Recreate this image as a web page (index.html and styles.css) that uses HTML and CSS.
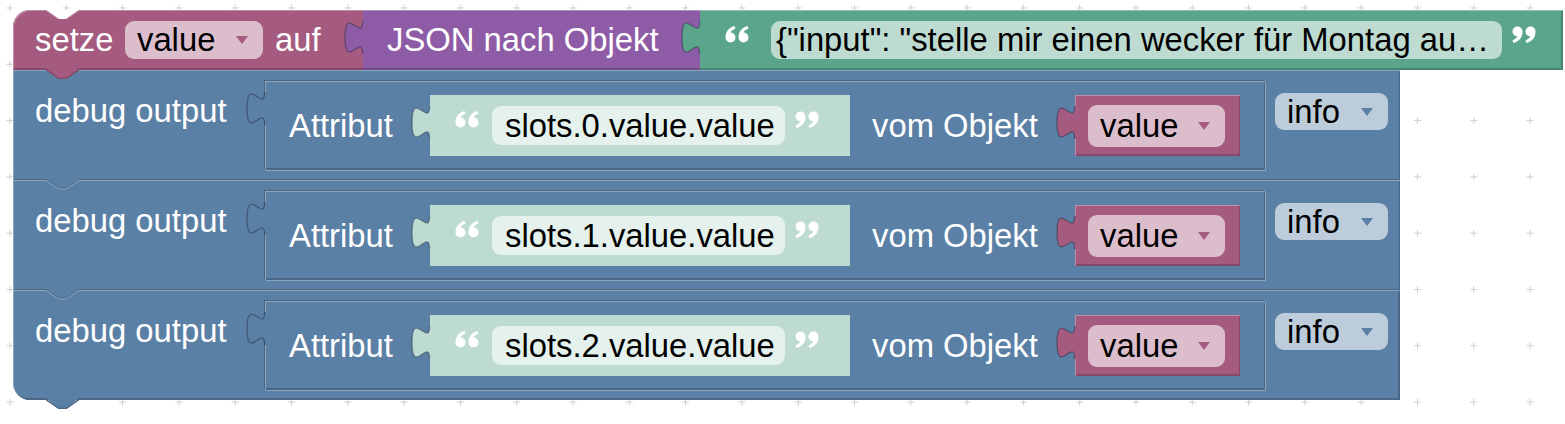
FILE: index.html
```html
<!DOCTYPE html>
<html lang="de">
<head>
  <meta charset="UTF-8">
  <meta name="viewport" content="width=device-width, initial-scale=1.0">
  <title>Blockly - JSON debug</title>
  <link rel="stylesheet" href="styles.css">
</head>
<body>
  <!-- workspace grid -->
  <svg class="grid" width="1565" height="424">
    <defs>
      <pattern id="dots" x="6.5" y="4.5" width="56.3" height="56.3" patternUnits="userSpaceOnUse">
        <path d="M0 3.5 H7 M3.5 0 V7" stroke="#cfcfcf" stroke-width="1"/>
      </pattern>
    </defs>
    <rect width="100%" height="100%" fill="url(#dots)"/>
  </svg>

  <div class="workspace">
    <div class="stack">

      <!-- setze value auf (JSON nach Objekt "...") -->
      <div class="block var set-block">
        <svg class="notch notch-cut" viewBox="0 0 33 9"><polygon points="0,0 33,0 20,9 13,9"/><polyline points="0,0.5 13,9.5 20,9.5 33,0.5"/></svg>
        <span class="label">setze</span>
        <span class="field dropdown var-field">value<i class="arrow"></i></span>
        <span class="label auf">auf</span>
        <div class="block json json-block">
          <svg class="tab" viewBox="0 0 19 33"><path class="fill" d="M19,0 H17.6 C17.6,22 0,-17.6 0,16.5 S17.6,11 17.6,33 H19 Z"/><path class="line" d="M17.6,0 C17.6,22 0,-17.6 0,16.5 S17.6,11 17.6,33"/></svg>
          <span class="label">JSON nach Objekt</span>
          <div class="block text text-block">
            <svg class="tab" viewBox="0 0 19 33"><path class="fill" d="M19,0 H17.6 C17.6,22 0,-17.6 0,16.5 S17.6,11 17.6,33 H19 Z"/><path class="line" d="M17.6,0 C17.6,22 0,-17.6 0,16.5 S17.6,11 17.6,33"/></svg>
            <svg class="quote" viewBox="0 0 24 17"><path d="M0.5,11.5 C0.5,5.5 3.5,2 9.5,0 L10.5,2.6 C7.5,4 6,5.5 5.5,6.5 A5,5 0 1 1 0.5,11.5 Z M13.5,11.5 C13.5,5.5 16.5,2 22.5,0 L23.5,2.6 C20.5,4 19,5.5 18.5,6.5 A5,5 0 1 1 13.5,11.5 Z"/></svg>
            <span class="field text-field">{"input": "stelle mir einen wecker für Montag au…</span>
            <svg class="quote close" viewBox="0 0 24 17"><path d="M0.5,11.5 C0.5,5.5 3.5,2 9.5,0 L10.5,2.6 C7.5,4 6,5.5 5.5,6.5 A5,5 0 1 1 0.5,11.5 Z M13.5,11.5 C13.5,5.5 16.5,2 22.5,0 L23.5,2.6 C20.5,4 19,5.5 18.5,6.5 A5,5 0 1 1 13.5,11.5 Z"/></svg>
          </div>
        </div>
        <svg class="notch notch-next" viewBox="0 0 33 11"><polygon points="0,0 33,0 20,11 13,11"/><polyline points="0,1.5 13,10.5 20,10.5 33,1.5"/></svg>
      </div>

      <!-- debug output 1 -->
      <div class="block proc debug-block">
        <span class="label">debug output</span>
        <div class="block proc attr-block">
          <svg class="tab" viewBox="0 0 19 33"><path class="fill" d="M19,0 H17.6 C17.6,22 0,-17.6 0,16.5 S17.6,11 17.6,33 H19 Z"/><path class="line" d="M17.6,0 C17.6,22 0,-17.6 0,16.5 S17.6,11 17.6,33"/></svg>
          <span class="label attr-label">Attribut</span>
          <div class="block shadow str-block">
            <svg class="tab" viewBox="0 0 19 33"><path class="fill" d="M19,0 H17.6 C17.6,22 0,-17.6 0,16.5 S17.6,11 17.6,33 H19 Z"/><path class="line" d="M17.6,0 C17.6,22 0,-17.6 0,16.5 S17.6,11 17.6,33"/></svg>
            <svg class="quote" viewBox="0 0 24 17"><path d="M0.5,11.5 C0.5,5.5 3.5,2 9.5,0 L10.5,2.6 C7.5,4 6,5.5 5.5,6.5 A5,5 0 1 1 0.5,11.5 Z M13.5,11.5 C13.5,5.5 16.5,2 22.5,0 L23.5,2.6 C20.5,4 19,5.5 18.5,6.5 A5,5 0 1 1 13.5,11.5 Z"/></svg>
            <span class="field str-field">slots.0.value.value</span>
            <svg class="quote close" viewBox="0 0 24 17"><path d="M0.5,11.5 C0.5,5.5 3.5,2 9.5,0 L10.5,2.6 C7.5,4 6,5.5 5.5,6.5 A5,5 0 1 1 0.5,11.5 Z M13.5,11.5 C13.5,5.5 16.5,2 22.5,0 L23.5,2.6 C20.5,4 19,5.5 18.5,6.5 A5,5 0 1 1 13.5,11.5 Z"/></svg>
          </div>
          <span class="label vom-label">vom Objekt</span>
          <div class="block var var-block">
            <svg class="tab" viewBox="0 0 19 33"><path class="fill" d="M19,0 H17.6 C17.6,22 0,-17.6 0,16.5 S17.6,11 17.6,33 H19 Z"/><path class="line" d="M17.6,0 C17.6,22 0,-17.6 0,16.5 S17.6,11 17.6,33"/></svg>
            <span class="field dropdown var-field">value<i class="arrow"></i></span>
          </div>
        </div>
        <span class="field dropdown info-field">info<i class="arrow"></i></span>
      </div>

      <!-- debug output 2 -->
      <div class="block proc debug-block">
        <svg class="seam" viewBox="0 0 33 11"><rect width="33" height="2"/><polyline class="dark" points="0,0.5 13,9 20,9 33,0.5"/><polyline class="light" points="0,1.5 13,10 20,10 33,1.5"/></svg>
        <span class="label">debug output</span>
        <div class="block proc attr-block">
          <svg class="tab" viewBox="0 0 19 33"><path class="fill" d="M19,0 H17.6 C17.6,22 0,-17.6 0,16.5 S17.6,11 17.6,33 H19 Z"/><path class="line" d="M17.6,0 C17.6,22 0,-17.6 0,16.5 S17.6,11 17.6,33"/></svg>
          <span class="label attr-label">Attribut</span>
          <div class="block shadow str-block">
            <svg class="tab" viewBox="0 0 19 33"><path class="fill" d="M19,0 H17.6 C17.6,22 0,-17.6 0,16.5 S17.6,11 17.6,33 H19 Z"/><path class="line" d="M17.6,0 C17.6,22 0,-17.6 0,16.5 S17.6,11 17.6,33"/></svg>
            <svg class="quote" viewBox="0 0 24 17"><path d="M0.5,11.5 C0.5,5.5 3.5,2 9.5,0 L10.5,2.6 C7.5,4 6,5.5 5.5,6.5 A5,5 0 1 1 0.5,11.5 Z M13.5,11.5 C13.5,5.5 16.5,2 22.5,0 L23.5,2.6 C20.5,4 19,5.5 18.5,6.5 A5,5 0 1 1 13.5,11.5 Z"/></svg>
            <span class="field str-field">slots.1.value.value</span>
            <svg class="quote close" viewBox="0 0 24 17"><path d="M0.5,11.5 C0.5,5.5 3.5,2 9.5,0 L10.5,2.6 C7.5,4 6,5.5 5.5,6.5 A5,5 0 1 1 0.5,11.5 Z M13.5,11.5 C13.5,5.5 16.5,2 22.5,0 L23.5,2.6 C20.5,4 19,5.5 18.5,6.5 A5,5 0 1 1 13.5,11.5 Z"/></svg>
          </div>
          <span class="label vom-label">vom Objekt</span>
          <div class="block var var-block">
            <svg class="tab" viewBox="0 0 19 33"><path class="fill" d="M19,0 H17.6 C17.6,22 0,-17.6 0,16.5 S17.6,11 17.6,33 H19 Z"/><path class="line" d="M17.6,0 C17.6,22 0,-17.6 0,16.5 S17.6,11 17.6,33"/></svg>
            <span class="field dropdown var-field">value<i class="arrow"></i></span>
          </div>
        </div>
        <span class="field dropdown info-field">info<i class="arrow"></i></span>
      </div>

      <!-- debug output 3 -->
      <div class="block proc debug-block last">
        <svg class="seam" viewBox="0 0 33 11"><rect width="33" height="2"/><polyline class="dark" points="0,0.5 13,9 20,9 33,0.5"/><polyline class="light" points="0,1.5 13,10 20,10 33,1.5"/></svg>
        <span class="label">debug output</span>
        <div class="block proc attr-block">
          <svg class="tab" viewBox="0 0 19 33"><path class="fill" d="M19,0 H17.6 C17.6,22 0,-17.6 0,16.5 S17.6,11 17.6,33 H19 Z"/><path class="line" d="M17.6,0 C17.6,22 0,-17.6 0,16.5 S17.6,11 17.6,33"/></svg>
          <span class="label attr-label">Attribut</span>
          <div class="block shadow str-block">
            <svg class="tab" viewBox="0 0 19 33"><path class="fill" d="M19,0 H17.6 C17.6,22 0,-17.6 0,16.5 S17.6,11 17.6,33 H19 Z"/><path class="line" d="M17.6,0 C17.6,22 0,-17.6 0,16.5 S17.6,11 17.6,33"/></svg>
            <svg class="quote" viewBox="0 0 24 17"><path d="M0.5,11.5 C0.5,5.5 3.5,2 9.5,0 L10.5,2.6 C7.5,4 6,5.5 5.5,6.5 A5,5 0 1 1 0.5,11.5 Z M13.5,11.5 C13.5,5.5 16.5,2 22.5,0 L23.5,2.6 C20.5,4 19,5.5 18.5,6.5 A5,5 0 1 1 13.5,11.5 Z"/></svg>
            <span class="field str-field">slots.2.value.value</span>
            <svg class="quote close" viewBox="0 0 24 17"><path d="M0.5,11.5 C0.5,5.5 3.5,2 9.5,0 L10.5,2.6 C7.5,4 6,5.5 5.5,6.5 A5,5 0 1 1 0.5,11.5 Z M13.5,11.5 C13.5,5.5 16.5,2 22.5,0 L23.5,2.6 C20.5,4 19,5.5 18.5,6.5 A5,5 0 1 1 13.5,11.5 Z"/></svg>
          </div>
          <span class="label vom-label">vom Objekt</span>
          <div class="block var var-block">
            <svg class="tab" viewBox="0 0 19 33"><path class="fill" d="M19,0 H17.6 C17.6,22 0,-17.6 0,16.5 S17.6,11 17.6,33 H19 Z"/><path class="line" d="M17.6,0 C17.6,22 0,-17.6 0,16.5 S17.6,11 17.6,33"/></svg>
            <span class="field dropdown var-field">value<i class="arrow"></i></span>
          </div>
        </div>
        <span class="field dropdown info-field">info<i class="arrow"></i></span>
        <svg class="notch notch-next" viewBox="0 0 33 11"><polygon points="0,0 33,0 20,11 13,11"/><polyline points="0,1.5 13,10.5 20,10.5 33,1.5"/></svg>
      </div>

    </div>
  </div>
</body>
</html>
```

FILE: styles.css
```css
/* Blockly-like workspace */
body {
  margin: 0;
  background: #fff;
  font-family: "Liberation Sans", Arial, sans-serif;
  font-size: 32.8px;
  line-height: 38px;
  height: 424px;
  overflow: hidden;
  position: relative;
}
.grid {
  position: absolute;
  left: 0;
  top: 0;
}
.workspace {
  position: relative;
  padding: 10px 0 0 13px;
}
.stack {
  display: flex;
  flex-direction: column;
  align-items: flex-start;
}

/* block colours */
.var {
  --c: #a55b80;
  --light: #c08ca6;
  --dark: #844966;
}
.json {
  --c: #8e5ca6;
  --light: #b08dc1;
  --dark: #724a85;
}
.text {
  --c: #5ba58d;
  --light: #8cc0af;
  --dark: #498471;
}
.proc {
  --c: #5b80a5;
  --light: #8ca6c0;
  --dark: #496684;
}
.shadow {
  --c: #bddbd1;
  --light: #d4e8e1;
  --dark: #a9c5bb;
}

.block {
  position: relative;
  display: flex;
  align-items: center;
  box-sizing: border-box;
  flex-shrink: 0;
  background: var(--c);
}
.label {
  color: #fff;
  white-space: nowrap;
}

/* output tab of a plugged block */
.tab {
  position: absolute;
  left: -18px;
  top: 11px;
  width: 19px;
  height: 33px;
  overflow: visible;
}
.tab .fill {
  fill: var(--c);
}
.tab .line {
  fill: none;
  stroke: rgba(30, 40, 60, 0.45);
  stroke-width: 1.3;
}

/* previous / next notches */
.notch {
  position: absolute;
  left: 33px;
  width: 33px;
  z-index: 3;
}
.notch polyline {
  fill: none;
  stroke-width: 1;
}
.notch-cut {
  top: 0;
  height: 9px;
}
.notch-cut polygon {
  fill: #fff;
}
.notch-cut polyline {
  stroke: var(--light);
}
.notch-next {
  top: calc(100% - 2px);
  height: 11px;
}
.notch-next polygon {
  fill: var(--c);
}
.notch-next polyline {
  stroke: var(--dark);
  stroke-width: 1.5;
}
.seam {
  position: absolute;
  left: 33px;
  top: -1px;
  width: 33px;
  height: 11px;
}
.seam rect {
  fill: var(--c);
}
.seam polyline {
  fill: none;
  stroke-width: 1;
}
.seam .dark {
  stroke: var(--dark);
}
.seam .light {
  stroke: var(--light);
}

/* fields */
.field {
  display: flex;
  align-items: center;
  box-sizing: border-box;
  height: 38px;
  border-radius: 9px;
  color: #000;
  white-space: nowrap;
  flex-shrink: 0;
}
.dropdown {
  padding: 0 15px 0 12px;
}
.arrow {
  margin-left: auto;
  width: 0;
  height: 0;
  border-left: 6px solid transparent;
  border-right: 6px solid transparent;
  border-top: 8px solid #a55b80;
}
.var-field {
  background: #dbbdcc;
}
.var-field .arrow {
  border-top-color: #a55b80;
}
.info-field {
  width: 113px;
  height: 37px;
  margin-left: 10px;
  margin-top: 12px;
  background: #bdccdb;
}
.info-field .arrow {
  border-top-color: #5b80a5;
}

.quote {
  align-self: flex-start;
  margin-top: 16px;
  width: 24px;
  height: 17px;
  fill: #fff;
}
.quote.close {
  transform: rotate(180deg);
  margin-left: 10px;
}

/* setze ... auf */
.set-block {
  width: 1550px;
  height: 60px;
  padding-left: 22px;
  border-top-left-radius: 17px;
  box-shadow: inset 1px 1px var(--light), inset 0 -2px var(--dark);
  z-index: 2;
}
.set-block > .var-field {
  width: 138px;
  margin-left: 11.6px;
}
.set-block .auf {
  margin-left: 12px;
}
.json-block {
  align-self: stretch;
  margin-left: auto;
  width: 1200px;
  padding-left: 24px;
  box-shadow: inset 0 1px var(--light), inset 0 -2px var(--dark);
}
.text-block {
  align-self: stretch;
  margin-left: auto;
  width: 863px;
  padding-left: 25px;
  box-shadow: inset 0 1px var(--light), inset -2px -2px var(--dark);
}
.text-field {
  width: 731px;
  margin-left: 22px;
  padding-left: 5px;
  overflow: hidden;
  background: #bddbd1;
}

/* debug output */
.debug-block {
  width: 1387px;
  height: 110px;
  padding: 11px 12px 0 22px;
  align-items: flex-start;
  box-shadow: inset 1px 1px var(--light), inset -1px -1px var(--dark);
}
.debug-block > .label {
  margin-top: 11px;
}
.debug-block.last {
  border-bottom-left-radius: 17px;
  box-shadow: inset 1px 1px var(--light), inset -2px -2px var(--dark);
}
.attr-block {
  margin-left: auto;
  width: 1000px;
  height: 89px;
  padding-left: 24px;
  box-shadow: inset 1px 1px var(--light), inset -1px -2px var(--dark), -1px -1px #46637f, 1px 1px #8ca6c0;
}
.attr-label {
  width: 141px;
}
.vom-label {
  width: 203px;
  margin-left: 22px;
}
.str-block {
  width: 420px;
  height: 61px;
  padding-left: 25px;
}
.str-field {
  width: 293px;
  height: 39px;
  margin-left: 13px;
  padding: 0 13px;
  background: #e5f1ed;
}
.var-block {
  width: 165px;
  height: 61px;
  padding-left: 13px;
  box-shadow: inset 1px 1px var(--light), inset -1px -2px var(--dark);
}
.var-block .var-field {
  width: 137px;
  height: 42px;
}
```
